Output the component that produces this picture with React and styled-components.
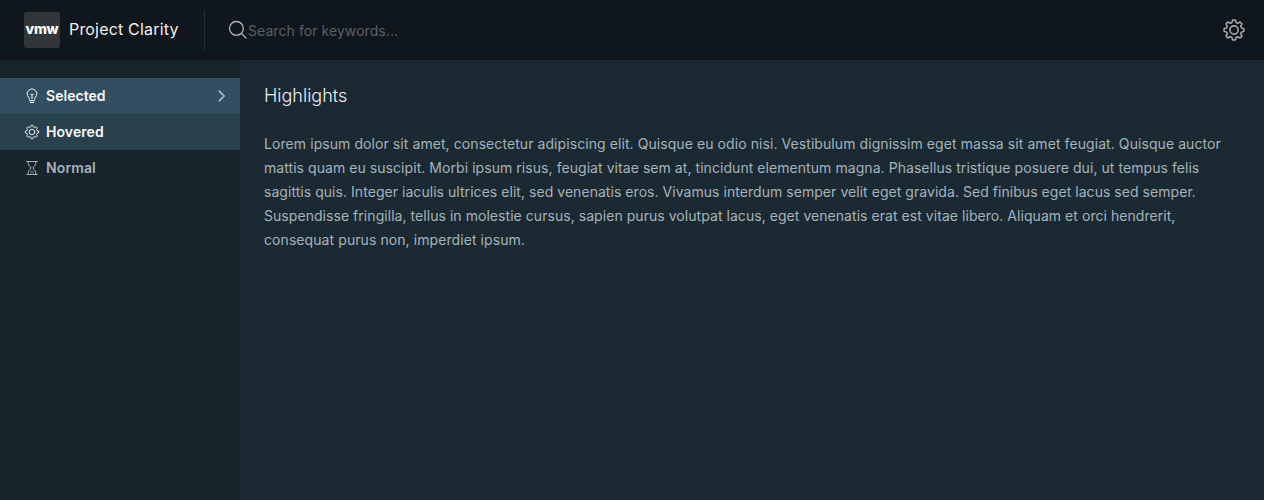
import React from "react";
import styled, { createGlobalStyle } from "styled-components";

const GlobalStyle = createGlobalStyle`
  * { box-sizing: border-box; }
  body {
    margin: 0;
    background: #1b2a32;
    font-family: Metropolis, Inter, "Open Sans", sans-serif;
    font-size: 14px;
  }
`;

const Page = styled.div`
  display: flex;
  flex-direction: column;
  height: 100vh;
  overflow: hidden;
`;

const Header = styled.header`
  display: flex;
  align-items: center;
  flex: none;
  height: 60px;
  padding: 0 18px 0 24px;
  background: #0f161c;
`;

const Branding = styled.div`
  display: flex;
  align-items: center;
  width: 180px;
`;

const Logo = styled.div`
  display: flex;
  align-items: center;
  justify-content: center;
  flex: none;
  width: 36px;
  height: 36px;
  margin-right: 9px;
  padding-bottom: 3px;
  border-radius: 3px;
  background: #313638;
  color: #fff;
  font-size: 14px;
  font-weight: 800;
  line-height: 18px;
  letter-spacing: -0.3px;
`;

const Title = styled.span`
  padding-bottom: 2px;
  color: #f0f1f2;
  font-size: 16px;
  line-height: 24px;
  letter-spacing: 0.18px;
  white-space: nowrap;
`;

const Search = styled.div`
  display: flex;
  align-items: center;
  flex: 1;
  height: 40px;
  padding-left: 23px;
  border-left: 1px solid #262d32;
`;

const SearchText = styled.span`
  padding-top: 2px;
  color: #5b6064;
  line-height: 20px;
  letter-spacing: 0.07px;
`;

const Icon = styled.svg`
  display: block;
  flex: none;
  width: ${(p) => p.$size}px;
  height: ${(p) => p.$size}px;
  fill: none;
  stroke: currentColor;
  stroke-width: ${(p) => p.$stroke || 2};
  stroke-linecap: round;
  stroke-linejoin: round;
  color: ${(p) => p.$color || "inherit"};
`;

const Body = styled.div`
  display: flex;
  flex: 1;
  min-height: 0;
`;

const Sidebar = styled.nav`
  flex: none;
  width: 240px;
  padding-top: 18px;
  background: #17242b;
`;

const tones = {
  selected: { background: "#324f61", color: "#fafafa" },
  hovered: { background: "#29404d", color: "#fafafa" },
  normal: { background: "transparent", color: "#a5b3bb" },
};

const NavItem = styled.div`
  display: flex;
  align-items: center;
  height: 36px;
  padding: 0 10px 0 24px;
  background: ${(p) => tones[p.$tone].background};
  color: ${(p) => tones[p.$tone].color};
`;

const NavLabel = styled.span`
  flex: 1;
  margin-left: 6px;
  font-weight: 600;
  line-height: 20px;
  letter-spacing: ${(p) => p.$spacing}px;
`;

const Main = styled.main`
  flex: 1;
  padding: 24px;
  background: #1b2a32;
`;

const Heading = styled.h1`
  margin: 0 0 24px;
  color: #eef1f3;
  font-size: 18px;
  font-weight: 300;
  line-height: 24px;
`;

const Paragraph = styled.p`
  margin: 0;
  color: #a5b3bb;
  line-height: 24px;
`;

const Line = styled.span`
  display: block;
  white-space: nowrap;
  letter-spacing: ${(p) => p.$spacing}px;
`;

const lines = [
  ["Lorem ipsum dolor sit amet, consectetur adipiscing elit. Quisque eu odio nisi. Vestibulum dignissim eget massa sit amet feugiat. Quisque auctor", 0.075],
  ["mattis quam eu suscipit. Morbi ipsum risus, feugiat vitae sem at, tincidunt elementum magna. Phasellus tristique posuere dui, ut tempus felis", 0.058],
  ["sagittis quis. Integer iaculis ultrices elit, sed venenatis eros. Vivamus interdum semper velit eget gravida. Sed finibus eget lacus sed semper.", 0.046],
  ["Suspendisse fringilla, tellus in molestie cursus, sapien purus volutpat lacus, eget venenatis erat est vitae libero. Aliquam et orci hendrerit,", 0.05],
  ["consequat purus non, imperdiet ipsum.", 0.078],
];

function CogIcon({ size, color, stroke }) {
  return (
    <Icon viewBox="0 0 36 36" $size={size} $color={color} $stroke={stroke}>
      <circle cx="18" cy="18" r="6.2" />
      <path d="M32.9 16.4v3.2q0 .5-.6.7l-3.2.9-1 2.4 1.6 2.9q.3.6-.1 1l-2.1 2.1q-.4.4-1 .1l-2.9-1.6-2.4 1-.9 3.2q-.2.6-.7.6h-3.2q-.5 0-.7-.6l-.9-3.2-2.4-1-2.9 1.6q-.6.3-1-.1l-2.1-2.1q-.4-.4-.1-1l1.6-2.9-1-2.4-3.2-.9q-.6-.2-.6-.7v-3.2q0-.5.6-.7l3.2-.9 1-2.4-1.6-2.9q-.3-.6.1-1l2.1-2.1q.4-.4 1-.1l2.9 1.6 2.4-1 .9-3.2q.2-.6.7-.6h3.2q.5 0 .7.6l.9 3.2 2.4 1 2.9-1.6q.6-.3 1 .1l2.1 2.1q.4.4.1 1l-1.6 2.9 1 2.4 3.2.9q.6.2.6.7Z" />
    </Icon>
  );
}

function BulbIcon() {
  return (
    <Icon viewBox="0 0 16 16" $size={16} $stroke={1}>
      <path d="M5.6 11.2c0-1.7-2.4-2.5-2.4-5.4a4.8 4.8 0 0 1 9.6 0c0 2.9-2.4 3.7-2.4 5.4" />
      <path d="M5.5 12.7h5M6.4 14.5h3.2M8 10.6V7M6.8 6.2 8 7l1.2-.8" />
    </Icon>
  );
}

function HourglassIcon() {
  return (
    <Icon viewBox="0 0 16 16" $size={16} $stroke={1}>
      <path d="M2.7 1.5h10.6M2.7 14.5h10.6M4.3 1.5v2.2c0 1.8 2.5 2.7 2.5 4.3s-2.5 2.5-2.5 4.3v2.2M11.7 1.5v2.2c0 1.8-2.5 2.7-2.5 4.3s2.5 2.5 2.5 4.3v2.2M6.8 12h2.4" />
    </Icon>
  );
}

export default function App() {
  return (
    <Page>
      <GlobalStyle />
      <Header>
        <Branding>
          <Logo>vmw</Logo>
          <Title>Project Clarity</Title>
        </Branding>
        <Search>
          <Icon viewBox="0 0 20 20" $size={20} $stroke={1.3} $color="#b3b6b8">
            <circle cx="8.4" cy="8.4" r="6.9" />
            <path d="m13.8 13.8 4.3 4.3" />
          </Icon>
          <SearchText>Search for keywords...</SearchText>
        </Search>
        <CogIcon size={24} color="#a9acae" stroke={2.3} />
      </Header>
      <Body>
        <Sidebar>
          <NavItem $tone="selected">
            <BulbIcon />
            <NavLabel $spacing={0.03}>Selected</NavLabel>
            <Icon viewBox="0 0 12 12" $size={12} $stroke={1.6} $color="#adbbc4">
              <path d="m1.2 1.2 5 4.8-5 4.8" />
            </Icon>
          </NavItem>
          <NavItem $tone="hovered">
            <CogIcon size={16} stroke={2} />
            <NavLabel $spacing={0.08}>Hovered</NavLabel>
          </NavItem>
          <NavItem $tone="normal">
            <HourglassIcon />
            <NavLabel $spacing={0.12}>Normal</NavLabel>
          </NavItem>
        </Sidebar>
        <Main>
          <Heading>Highlights</Heading>
          <Paragraph>
            {lines.map(([text, spacing]) => (
              <Line key={text} $spacing={spacing}>{text}</Line>
            ))}
          </Paragraph>
        </Main>
      </Body>
    </Page>
  );
}
